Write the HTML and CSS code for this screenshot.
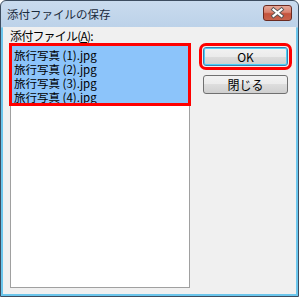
FILE: index.html
```html
<!DOCTYPE html>
<html lang="ja">
<head>
<meta charset="utf-8">
<title>添付ファイルの保存</title>
<link rel="stylesheet" href="styles.css">
</head>
<body>
<div class="window">
  <div class="titlebar">
    <span class="title">添付ファイルの保存</span>
    <div class="close" aria-label="閉じる">
      <svg width="29" height="16" viewBox="0 0 29 16">
        <path d="M10.5 4.5 L18.5 11 M18.5 4.5 L10.5 11" stroke="#555555" stroke-width="4" stroke-linecap="square" fill="none"/>
        <path d="M10.5 4.5 L18.5 11 M18.5 4.5 L10.5 11" stroke="#ffffff" stroke-width="2.2" stroke-linecap="square" fill="none"/>
      </svg>
    </div>
  </div>
  <div class="client">
    <div class="left">
      <div class="label">添付ファイル(<u>A</u>):</div>
      <div class="listbox">
        <div class="selection">
          <div class="item">旅行写真 (1).jpg</div>
          <div class="item">旅行写真 (2).jpg</div>
          <div class="item">旅行写真 (3).jpg</div>
          <div class="item">旅行写真 (4).jpg</div>
        </div>
      </div>
    </div>
    <div class="buttons">
      <button class="btn btn-default">OK</button>
      <button class="btn">閉じる</button>
    </div>
  </div>
</div>
</body>
</html>
```

FILE: styles.css
```css
html, body {
  margin: 0;
  padding: 0;
}
body {
  width: 299px;
  height: 297px;
  font-family: "Noto Sans CJK JP", "Liberation Sans", sans-serif;
  font-size: 12px;
  color: #000;
  background: #fff;
}
.window {
  box-sizing: border-box;
  width: 299px;
  height: 297px;
  border: 1px solid #3d4d60;
  border-radius: 6px 6px 0 0;
  background: linear-gradient(#c9dbee 0px, #bcd2e9 26px, #6cc6ec 27px, #6cc6ec 100%);
  padding: 0 2px 2px 2px;
  display: flex;
  flex-direction: column;
}
.titlebar {
  height: 26px;
  display: flex;
  align-items: flex-start;
  padding: 0 4px 0 4px;
  flex: none;
}
.title {
  margin-top: 5px;
  font-size: 11.5px;
  line-height: 16px;
  color: #1a2a3c;
}
.close {
  margin-left: auto;
  margin-top: 4px;
  width: 29px;
  height: 16px;
  box-sizing: border-box;
  border: 1px solid #6b2a20;
  border-radius: 3px;
  background: linear-gradient(#e6a898 0%, #d98270 45%, #c4523c 55%, #c8634c 100%);
  display: flex;
  align-items: center;
  justify-content: center;
  overflow: hidden;
}
.close svg {
  display: block;
  flex: none;
}
.client {
  flex: 1;
  background: #f0f0f0;
  display: flex;
  padding: 2px 8px 6px 7px;
  min-height: 0;
}
.left {
  width: 180px;
  display: flex;
  flex-direction: column;
}
.label {
  line-height: 14px;
  margin-bottom: 1px;
  letter-spacing: -0.8px;
}
.label u {
  text-decoration: underline;
}
.listbox {
  flex: 1;
  box-sizing: border-box;
  border: 1px solid #a0a0a0;
  background: #fff;
}
.selection {
  background: #8cc4fa;
  padding-top: 3px;
  outline: 3px solid #ff0000;
  outline-offset: -1px;
}
.item {
  font-size: 11.5px;
  line-height: 14px;
  height: 14px;
  padding-left: 3px;
  white-space: nowrap;
}
.buttons {
  margin-left: 13px;
  width: 85px;
  padding-top: 18px;
  display: flex;
  flex-direction: column;
  gap: 9px;
}
.btn {
  box-sizing: border-box;
  width: 85px;
  height: 19px;
  padding: 0;
  margin: 0;
  border: 1px solid #707070;
  border-radius: 3px;
  background: linear-gradient(#f2f2f2 0%, #ebebeb 50%, #dddddd 50%, #cfcfcf 100%);
  font-family: "Noto Sans CJK JP", "Liberation Sans", sans-serif;
  font-size: 12px;
  line-height: 16px;
  color: #000;
}
.btn-default {
  border-color: #3c7fb1;
  box-shadow: inset 0 0 0 1px #48d1f8;
  outline: 3px solid #ff0000;
  outline-offset: 1px;
}
```
